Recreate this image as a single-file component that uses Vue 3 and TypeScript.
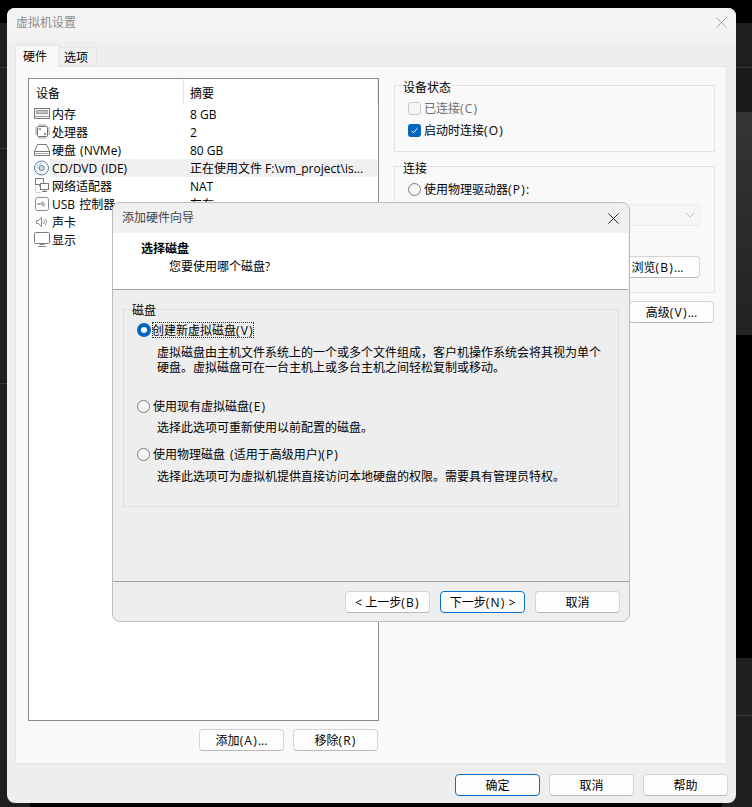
<script setup lang="ts">
interface Device {
  icon: string
  name: string
  value: string
  selected?: boolean
}

const devices: Device[] = [
  { icon: 'memory', name: '内存', value: '8 GB' },
  { icon: 'cpu', name: '处理器', value: '2' },
  { icon: 'disk', name: '硬盘 (NVMe)', value: '80 GB' },
  { icon: 'cd', name: 'CD/DVD (IDE)', value: '正在使用文件 F:\\vm_project\\is...', selected: true },
  { icon: 'net', name: '网络适配器', value: 'NAT' },
  { icon: 'usb', name: 'USB 控制器', value: '存在' },
  { icon: 'sound', name: '声卡', value: '' },
  { icon: 'display', name: '显示', value: '' }
]
</script>

<template>
  <div class="desktop">
    <div class="window">
      <div class="win-title">
        <span class="win-title-text">虚拟机设置</span>
        <svg class="win-close" width="11" height="11" viewBox="0 0 11 11"><path d="M.5.5l10 10M10.500.5l-10 10" stroke="#a8a8a8" fill="none" /></svg>
      </div>

      <div class="tabs">
        <div class="tab active">硬件</div>
        <div class="tab">选项</div>
      </div>

      <div class="panel">
        <div class="left-col">
          <div class="list">
            <div class="list-head">
              <div class="head-device">设备</div>
              <div class="head-summary">摘要</div>
            </div>
            <div v-for="d in devices" :key="d.name" class="row">
              <svg class="row-icon" width="16" height="16" viewBox="0 0 16 16" fill="none" stroke="#7a7a7a">
                <template v-if="d.icon === 'memory'">
                  <rect x=".5" y="2.500" width="15" height="10" fill="#f4f4f4" />
                  <path d="M2.500 4.500h11v3h-11z" fill="#c4c4c4" stroke="#9a9a9a" />
                  <path d="M1 10.500h14" stroke="#9a9a9a" />
                </template>
                <template v-else-if="d.icon === 'cpu'">
                  <rect x="3.500" y="2.500" width="10" height="10" rx="1" fill="#fff" stroke="#6f6f6f" />
                  <path d="M5 0v2M7 0v2M9 0v2M11 0v2M5 13v2M7 13v2M9 13v2M11 13v2M1 4h2M1 6h2M1 8h2M1 10h2M14 4h2M14 6h2M14 8h2M14 10h2" stroke="#a0a0a0" />
                  <path d="M5.500 4.500h1v1h-1zM10.500 9.500h1v1h-1z" stroke="#777" />
                </template>
                <template v-else-if="d.icon === 'disk'">
                  <path d="M3.500 2.500h9l3 6.500v4.500h-15V9z" fill="#fff" />
                  <path d="M.5 9.500h15" />
                  <path d="M1.500 11.500h13" stroke="#aaa" />
                </template>
                <template v-else-if="d.icon === 'cd'">
                  <circle cx="7.500" cy="8" r="7" fill="#f2f7fb" stroke="#5f8199" />
                  <circle cx="7.500" cy="8" r="2.500" fill="#cfe0ec" stroke="#5f8199" />
                  <path d="M3 8a4.500 4.500 0 0 1 4.500-4.500" stroke="#a9c3d5" />
                </template>
                <template v-else-if="d.icon === 'net'">
                  <rect x="1.500" y=".5" width="8" height="6" fill="#fff" />
                  <path d="M5.500 6.500v2" />
                  <rect x="6.500" y="5.500" width="8" height="6" fill="#fff" />
                  <path d="M10.500 11.500v2M8 13.500h5" />
                  <path d="M1.500 8.500v6h6" stroke="#aaa" stroke-dasharray="1 1" />
                </template>
                <template v-else-if="d.icon === 'usb'">
                  <rect x="1.500" y="1.500" width="13" height="13" rx="2" fill="#fff" stroke="#8a8a8a" />
                  <path d="M4.500 8h7M7 8l1.500-2h1.500M8 8l1.500 2h1.500" stroke="#888" />
                  <circle cx="4.500" cy="8" r="1" fill="#888" stroke="none" />
                </template>
                <template v-else-if="d.icon === 'sound'">
                  <path d="M2.500 6.500h2l3-3v9l-3-3h-2z" fill="#fff" stroke="#8a8a8a" />
                  <path d="M9.500 6a3 3 0 0 1 0 4M11 4.500a5 5 0 0 1 0 7" stroke="#999" />
                </template>
                <template v-else>
                  <rect x=".5" y=".5" width="15" height="11" rx="1" fill="#fff" />
                  <path d="M5.500 12.500h5M4 14.500h8" stroke="#8a8a8a" />
                </template>
              </svg>
              <div class="cells" :class="{ selected: d.selected }">
                <span class="cell-name">{{ d.name }}</span>
                <span class="cell-value">{{ d.value }}</span>
              </div>
            </div>
          </div>
          <div class="list-actions">
            <button class="btn" type="button">添加<span class="key">(A)</span>...</button>
            <button class="btn" type="button">移除<span class="key">(R)</span></button>
          </div>
        </div>

        <div class="right-col">
          <fieldset class="group status">
            <legend>设备状态</legend>
            <div class="opt-row muted">
              <span class="check"></span>
              <span class="label">已连接<span class="key">(C)</span></span>
            </div>
            <div class="opt-row next">
              <span class="check on">
                <svg width="13" height="13" viewBox="0 0 13 13"><path d="M3.500 6.800l2 2 4-4.500" stroke="#fff" fill="none" /></svg>
              </span>
              <span class="label">启动时连接<span class="key">(O)</span></span>
            </div>
          </fieldset>

          <fieldset class="group conn">
            <legend>连接</legend>
            <div class="opt-row">
              <span class="radio"></span>
              <span class="label">使用物理驱动器<span class="key">(P):</span></span>
            </div>
            <div class="select">
              <svg width="10" height="6" viewBox="0 0 10 6"><path d="M.5.5l4.500 4.500 4.500-4.500" stroke="#c4c4c4" fill="none" /></svg>
            </div>
            <div class="browse-row">
              <button class="btn" type="button">浏览<span class="key">(B)</span>...</button>
            </div>
          </fieldset>

          <div class="advanced-row">
            <button class="btn" type="button">高级<span class="key">(V)</span>...</button>
          </div>
        </div>
      </div>

      <div class="win-footer">
        <button class="btn primary" type="button">确定</button>
        <button class="btn" type="button">取消</button>
        <button class="btn" type="button">帮助</button>
      </div>
    </div>

    <div class="wizard">
      <div class="wiz-title">
        <span>添加硬件向导</span>
        <svg width="11" height="11" viewBox="0 0 11 11"><path d="M.5.5l10 10M10.500.5l-10 10" stroke="#222" fill="none" /></svg>
      </div>
      <div class="wiz-head">
        <div class="wiz-heading">选择磁盘</div>
        <div class="wiz-sub">您要使用哪个磁盘?</div>
      </div>
      <div class="wiz-body">
        <fieldset class="group disk-group">
          <legend>磁盘</legend>
          <div class="choice first">
            <div class="opt-row">
              <span class="radio on"></span>
              <span class="label focused">创建新虚拟磁盘<span class="key">(V)</span></span>
            </div>
            <p class="desc">虚拟磁盘由主机文件系统上的一个或多个文件组成，客户机操作系统会将其视为单个<br />硬盘。虚拟磁盘可在一台主机上或多台主机之间轻松复制或移动。</p>
          </div>
          <div class="choice second">
            <div class="opt-row">
              <span class="radio"></span>
              <span class="label">使用现有虚拟磁盘<span class="key">(E)</span></span>
            </div>
            <p class="desc">选择此选项可重新使用以前配置的磁盘。</p>
          </div>
          <div class="choice">
            <div class="opt-row">
              <span class="radio"></span>
              <span class="label spaced">使用物理磁盘 (适用于高级用户)<span class="key">(P)</span></span>
            </div>
            <p class="desc">选择此选项可为虚拟机提供直接访问本地硬盘的权限。需要具有管理员特权。</p>
          </div>
        </fieldset>
      </div>
      <div class="wiz-footer">
        <button class="btn" type="button">&lt; 上一步<span class="key">(B)</span></button>
        <button class="btn primary" type="button">下一步<span class="key">(N)</span> &gt;</button>
        <button class="btn" type="button">取消</button>
      </div>
    </div>
  </div>
</template>

<style scoped>
.desktop {
  position: relative;
  box-sizing: border-box;
  width: 752px;
  height: 807px;
  padding: 8px 0 0 7px;
  overflow: hidden;
  font-family: "Open Sans", "Noto Sans CJK SC", sans-serif;
  font-size: 12px;
  line-height: 14px;
  color: #000;
  background-color: #000;
  background-image:
    linear-gradient(to bottom, #000 0 23px, #1e1e1e 23px 67px, #3a3a3a 67px 68px, #1b1b1b 68px 112px, #353535 112px, #222 335px, #000 335px 658px, #1f1f1f 658px 715px, #3c3c3c 715px 716px, #1f1f1f 716px),
    linear-gradient(to bottom, #000 0 23px, #1e1e1e 23px 67px, #383838 67px 68px, #1e1e1e 68px 148px, #383838 148px 149px, #1e1e1e 149px 383px, #383838 383px 384px, #1e1e1e 384px);
  background-size: 30px 100%, 30px 100%;
  background-position: right top, left top;
  background-repeat: no-repeat;
}

.key {
  letter-spacing: 1.2px;
}

.window {
  display: flex;
  flex-direction: column;
  width: 729px;
  height: 795px;
  border-radius: 8px;
  background: #eeeeee;
  overflow: hidden;
}

.win-title {
  display: flex;
  flex: none;
  align-items: center;
  justify-content: space-between;
  height: 28px;
  padding: 0 9px;
  color: #8c8c8c;
  background: #f3f3f3;
}

.win-title-text {
  padding-top: 1px;
}

.win-close {
  flex: none;
}

.tabs {
  display: flex;
  flex: none;
  align-items: flex-end;
  height: 30px;
  padding: 9px 0 0 8px;
  box-sizing: border-box;
  background: linear-gradient(to bottom, #f3f3f3 0, #f3f3f3 2px, #eeeeee 8px);
}

.tab {
  box-sizing: border-box;
  height: 19px;
  width: 38px;
  padding: 3px 0 0 5px;
  background: #f0f0f0;
  border: 1px solid #e6e6e6;
  border-left: 0;
}

.tab.active {
  position: relative;
  z-index: 1;
  width: 44px;
  height: 22px;
  margin-bottom: -1px;
  padding: 4px 0 0 7px;
  background: #f9f9f9;
  border-left: 1px solid #e6e6e6;
  border-bottom: 0;
}

.panel {
  display: flex;
  flex: 1;
  gap: 15px;
  margin: 0 9px 0 8px;
  padding: 9px 0 0 12px;
  background: #f9f9f9;
  border: 1px solid #e5e5e5;
  min-height: 0;
}

.left-col {
  flex: none;
  width: 351px;
  padding-top: 2px;
}

.list {
  box-sizing: border-box;
  height: 643px;
  background: #fff;
  border: 1px solid #8b8b94;
}

.list-head {
  display: flex;
  height: 26px;
  line-height: 30px;
}

.head-device {
  box-sizing: border-box;
  width: 155px;
  padding-left: 7px;
  border-right: 1px solid #e4e4e4;
}

.head-summary {
  box-sizing: border-box;
  width: 194px;
  padding-left: 6px;
  border-right: 1px solid #e4e4e4;
}

.row {
  display: flex;
  align-items: center;
  height: 18px;
  padding: 0 1px 0 5px;
}

.row-icon {
  flex: none;
}

.cells {
  display: grid;
  flex: 1;
  grid-template-columns: 133px 1fr;
  height: 18px;
  line-height: 20px;
  overflow: hidden;
}

.cells.selected {
  background: #f0f0f0;
}

.cell-name {
  padding-left: 2px;
  white-space: nowrap;
  word-spacing: 1px;
}

.cell-value {
  padding-left: 7px;
  white-space: nowrap;
}

.list-actions {
  display: flex;
  justify-content: flex-end;
  gap: 9px;
  margin: 8px 1px 0 0;
}

.btn {
  box-sizing: border-box;
  width: 85px;
  height: 22px;
  padding: 1px 0 0;
  font: inherit;
  line-height: 20px;
  color: #000;
  background: #fdfdfd;
  border: 1px solid #d4d4d4;
  border-bottom-color: #b8b8b8;
  border-radius: 4px;
}

.btn.primary {
  border-color: #0a70c4;
}

.right-col {
  flex: none;
  width: 321px;
}

.group {
  box-sizing: border-box;
  margin: 0;
  padding: 0 13px;
  border: 1px solid #e2e2e2;
  min-width: 0;
}

.group legend {
  margin-left: -5px;
  padding: 5px 1px 0 0;
  line-height: 14px;
}

.status {
  height: 76px;
}

.conn {
  height: 136px;
  margin-top: 5px;
}

.opt-row {
  display: flex;
  align-items: center;
  gap: 3px;
  height: 20px;
  margin-top: 3px;
  white-space: nowrap;
}

.opt-row.next {
  margin-top: 2px;
}

.label {
  padding-top: 2px;
}

.spaced {
  word-spacing: 2px;
}

.muted {
  color: #6d6d6d;
}

.check {
  display: block;
  box-sizing: border-box;
  flex: none;
  width: 13px;
  height: 13px;
  background: #f6f6f6;
  border: 1px solid #c9c9c9;
  border-radius: 3px;
}

.check svg {
  display: block;
}

.check.on {
  background: #0067c0;
  border: 0;
}

.radio {
  display: block;
  box-sizing: border-box;
  flex: none;
  width: 13px;
  height: 13px;
  background: #f6f6f6;
  border: 1px solid #7b7b7b;
  border-radius: 50%;
}

.radio.on {
  width: 14px;
  height: 14px;
  margin-right: -2px;
  background: #fff;
  border: 4px solid #0067c0;
}

.select {
  box-sizing: border-box;
  display: flex;
  align-items: center;
  justify-content: flex-end;
  height: 22px;
  margin-top: 5px;
  padding-right: 5px;
  background: #f6f6f6;
  border: 1px solid #ececec;
  border-radius: 3px;
}

.select svg {
  display: block;
}

.browse-row {
  display: flex;
  justify-content: flex-end;
  margin: 30px 1px 0 0;
}

.advanced-row {
  display: flex;
  justify-content: flex-end;
  margin: 8px 1px 0 0;
}

.win-footer {
  display: flex;
  flex: none;
  justify-content: flex-end;
  gap: 9px;
  height: 39px;
  box-sizing: border-box;
  padding: 10px 8px 0 0;
}

.wizard {
  position: absolute;
  left: 112px;
  top: 202px;
  display: flex;
  flex-direction: column;
  box-sizing: border-box;
  width: 518px;
  height: 420px;
  background: #eeeeee;
  border: 1px solid #bcbcbc;
  border-radius: 8px;
  overflow: hidden;
}

.wiz-title {
  display: flex;
  flex: none;
  align-items: center;
  justify-content: space-between;
  height: 30px;
  padding: 0 10px 0 9px;
  color: #444;
  background: #f0f0f0;
}

.wiz-title svg {
  flex: none;
}

.wiz-head {
  flex: none;
  box-sizing: border-box;
  height: 57px;
  padding: 9px 0 0 28px;
  background: #fff;
  border-bottom: 1px solid #a2a2a2;
  margin-right: 1px;
}

.wiz-heading {
  font-weight: 700;
}

.wiz-sub {
  margin-top: 4px;
  padding-left: 28px;
}

.wiz-body {
  flex: 1;
  min-height: 0;
  padding: 10px 10px 0;
}

.disk-group {
  height: 207px;
  border-color: #dedede;
}

.group.disk-group legend {
  padding-top: 4px;
}

.opt-row .focused {
  outline: 1px dotted #333;
  outline-offset: -1px;
}

.choice.first {
  height: 76px;
  margin-top: 2px;
}

.choice.second {
  height: 48px;
}

.choice .opt-row {
  margin-top: 0;
}

.desc {
  margin: 5px 0 0;
  padding-left: 20px;
  line-height: 15px;
  white-space: nowrap;
}

.choice.second .desc {
  margin-top: 4px;
}

.wiz-footer {
  display: flex;
  flex: none;
  justify-content: flex-end;
  gap: 10px;
  box-sizing: border-box;
  height: 40px;
  padding: 9px 9px 0 0;
  border-top: 1px solid #a2a2a2;
}
</style>
